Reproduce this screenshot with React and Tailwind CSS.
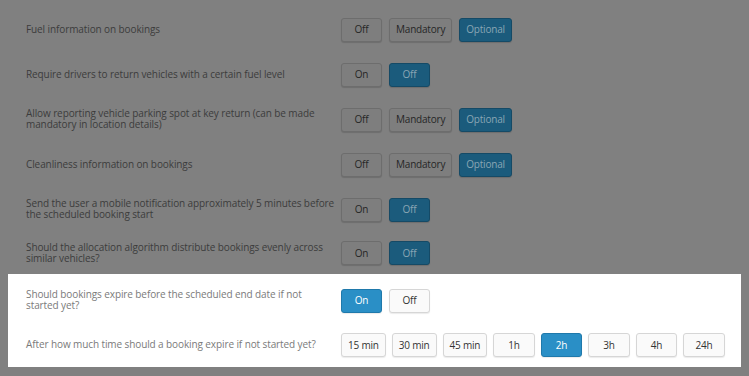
import React from "react";

const font = { fontFamily: '"Open Sans", "DejaVu Sans", sans-serif' };

function DimBtn({ label, active }) {
  return (
    <div
      className={
        "h-[24px] min-w-[41px] px-[6px] flex items-center justify-center rounded-[3px] border text-[10px] tracking-[-0.2px] shadow-[0_1px_1px_rgba(0,0,0,0.15)] " +
        (active
          ? "bg-[#1b5b7c] border-[#154a66] text-[#8aa6b4]"
          : "bg-[#7e7e7e] border-[#6d6d6d] text-[#262626]")
      }
    >
      {label}
    </div>
  );
}

function Btn({ label, active, wide }) {
  return (
    <div
      className={
        "h-[24px] px-[6px] flex items-center justify-center rounded-[3px] border text-[10px] tracking-[-0.2px] shadow-[0_1px_1px_rgba(0,0,0,0.08)] " +
        (wide ? "min-w-[41.5px] " : "min-w-[41px] ") +
        (active
          ? "bg-[#2a8fc6] border-[#1f79ab] text-white"
          : "bg-[#fafafa] border-[#d6d6d6] text-[#333]")
      }
    >
      {label}
    </div>
  );
}

const dimRows = [
  { label: "Fuel information on bookings", opts: ["Off", "Mandatory", "Optional"], active: 2 },
  { label: "Require drivers to return vehicles with a certain fuel level", opts: ["On", "Off"], active: 1 },
  {
    label: "Allow reporting vehicle parking spot at key return (can be made mandatory in location details)",
    opts: ["Off", "Mandatory", "Optional"],
    active: 2,
  },
  { label: "Cleanliness information on bookings", opts: ["Off", "Mandatory", "Optional"], active: 2 },
  {
    label: "Send the user a mobile notification approximately 5 minutes before the scheduled booking start",
    opts: ["On", "Off"],
    active: 1,
  },
  {
    label: "Should the allocation algorithm distribute bookings evenly across similar vehicles?",
    opts: ["On", "Off"],
    active: 1,
  },
];

const times = ["15 min", "30 min", "45 min", "1h", "2h", "3h", "4h", "24h"];

export default function App() {
  return (
    <div className="w-[749px] h-[376px] bg-[#808080] overflow-hidden px-[8px] pt-[7px]" style={font}>
      {dimRows.map((r, i) => (
        <div key={i} className={"flex items-center pl-[18px] " + (i === 5 ? "h-[42px]" : "h-[45px]")}>
          <div className="w-[315px] pr-[6px] text-[10px] tracking-[-0.1px] leading-[11px] text-[#3c3c3c] pb-[1px]">{r.label}</div>
          <div className="flex gap-[7px]">
            {r.opts.map((o, j) => (
              <DimBtn key={j} label={o} active={j === r.active} />
            ))}
          </div>
        </div>
      ))}
      <div className="bg-white pt-[4px] h-[93px]">
        <div className="flex items-center pl-[18px] h-[45px]">
          <div className="w-[315px] pr-[6px] text-[10px] tracking-[-0.1px] leading-[11px] text-[#7a7a7a] pb-[1px]">
            Should bookings expire before the scheduled end date if not started yet?
          </div>
          <div className="flex gap-[7px]">
            <Btn label="On" active />
            <Btn label="Off" />
          </div>
        </div>
        <div className="flex items-center pl-[18px] h-[44px]">
          <div className="w-[315px] pr-[6px] text-[10px] tracking-[-0.1px] leading-[11px] text-[#7a7a7a] pb-[1px]">
            After how much time should a booking expire if not started yet?
          </div>
          <div className="flex gap-[6px]">
            {times.map((t, j) => (
              <Btn key={j} label={t} active={j === 4} wide />
            ))}
          </div>
        </div>
      </div>
    </div>
  );
}
